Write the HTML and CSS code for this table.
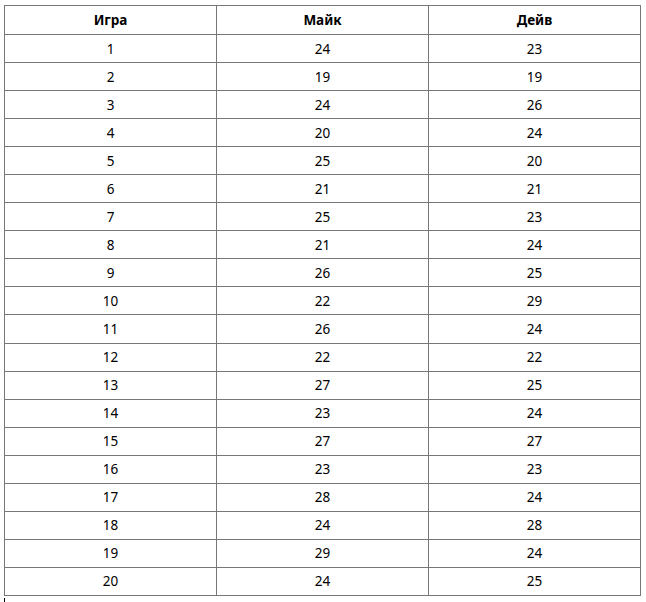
FILE: index.html
```html
<!DOCTYPE html>
<html lang="ru">
<head>
<meta charset="utf-8">
<link rel="stylesheet" href="styles.css">
</head>
<body>
<table class="score">
<thead>
<tr><th>Игра</th><th>Майк</th><th>Дейв</th></tr>
</thead>
<tbody>
<tr><td>1</td><td>24</td><td>23</td></tr>
<tr><td>2</td><td>19</td><td>19</td></tr>
<tr><td>3</td><td>24</td><td>26</td></tr>
<tr><td>4</td><td>20</td><td>24</td></tr>
<tr><td>5</td><td>25</td><td>20</td></tr>
<tr><td>6</td><td>21</td><td>21</td></tr>
<tr><td>7</td><td>25</td><td>23</td></tr>
<tr><td>8</td><td>21</td><td>24</td></tr>
<tr><td>9</td><td>26</td><td>25</td></tr>
<tr><td>10</td><td>22</td><td>29</td></tr>
<tr><td>11</td><td>26</td><td>24</td></tr>
<tr><td>12</td><td>22</td><td>22</td></tr>
<tr><td>13</td><td>27</td><td>25</td></tr>
<tr><td>14</td><td>23</td><td>24</td></tr>
<tr><td>15</td><td>27</td><td>27</td></tr>
<tr><td>16</td><td>23</td><td>23</td></tr>
<tr><td>17</td><td>28</td><td>24</td></tr>
<tr><td>18</td><td>24</td><td>28</td></tr>
<tr><td>19</td><td>29</td><td>24</td></tr>
<tr><td>20</td><td>24</td><td>25</td></tr>
</tbody>
</table>
<div class="after"></div>
</body>
</html>
```

FILE: styles.css
```css
html, body {
  margin: 0;
  padding: 0;
  background: #fff;
}
body {
  padding: 5px 0 0 4px;
  font-family: "Noto Sans", "Open Sans", sans-serif;
  font-size: 13.5px;
  color: #000;
}
.score {
  border-collapse: collapse;
  width: 637px;
  table-layout: fixed;
}
.score th, .score td {
  border: 1px solid #777;
  height: 28.05px;
  padding: 0;
  text-align: center;
  vertical-align: middle;
  box-sizing: border-box;
}
.score th {
  height: 29px;
  font-weight: bold;
}
.after {
  margin-top: 2px;
  height: 10px;
  border-left: 1px solid #000;
}
```
